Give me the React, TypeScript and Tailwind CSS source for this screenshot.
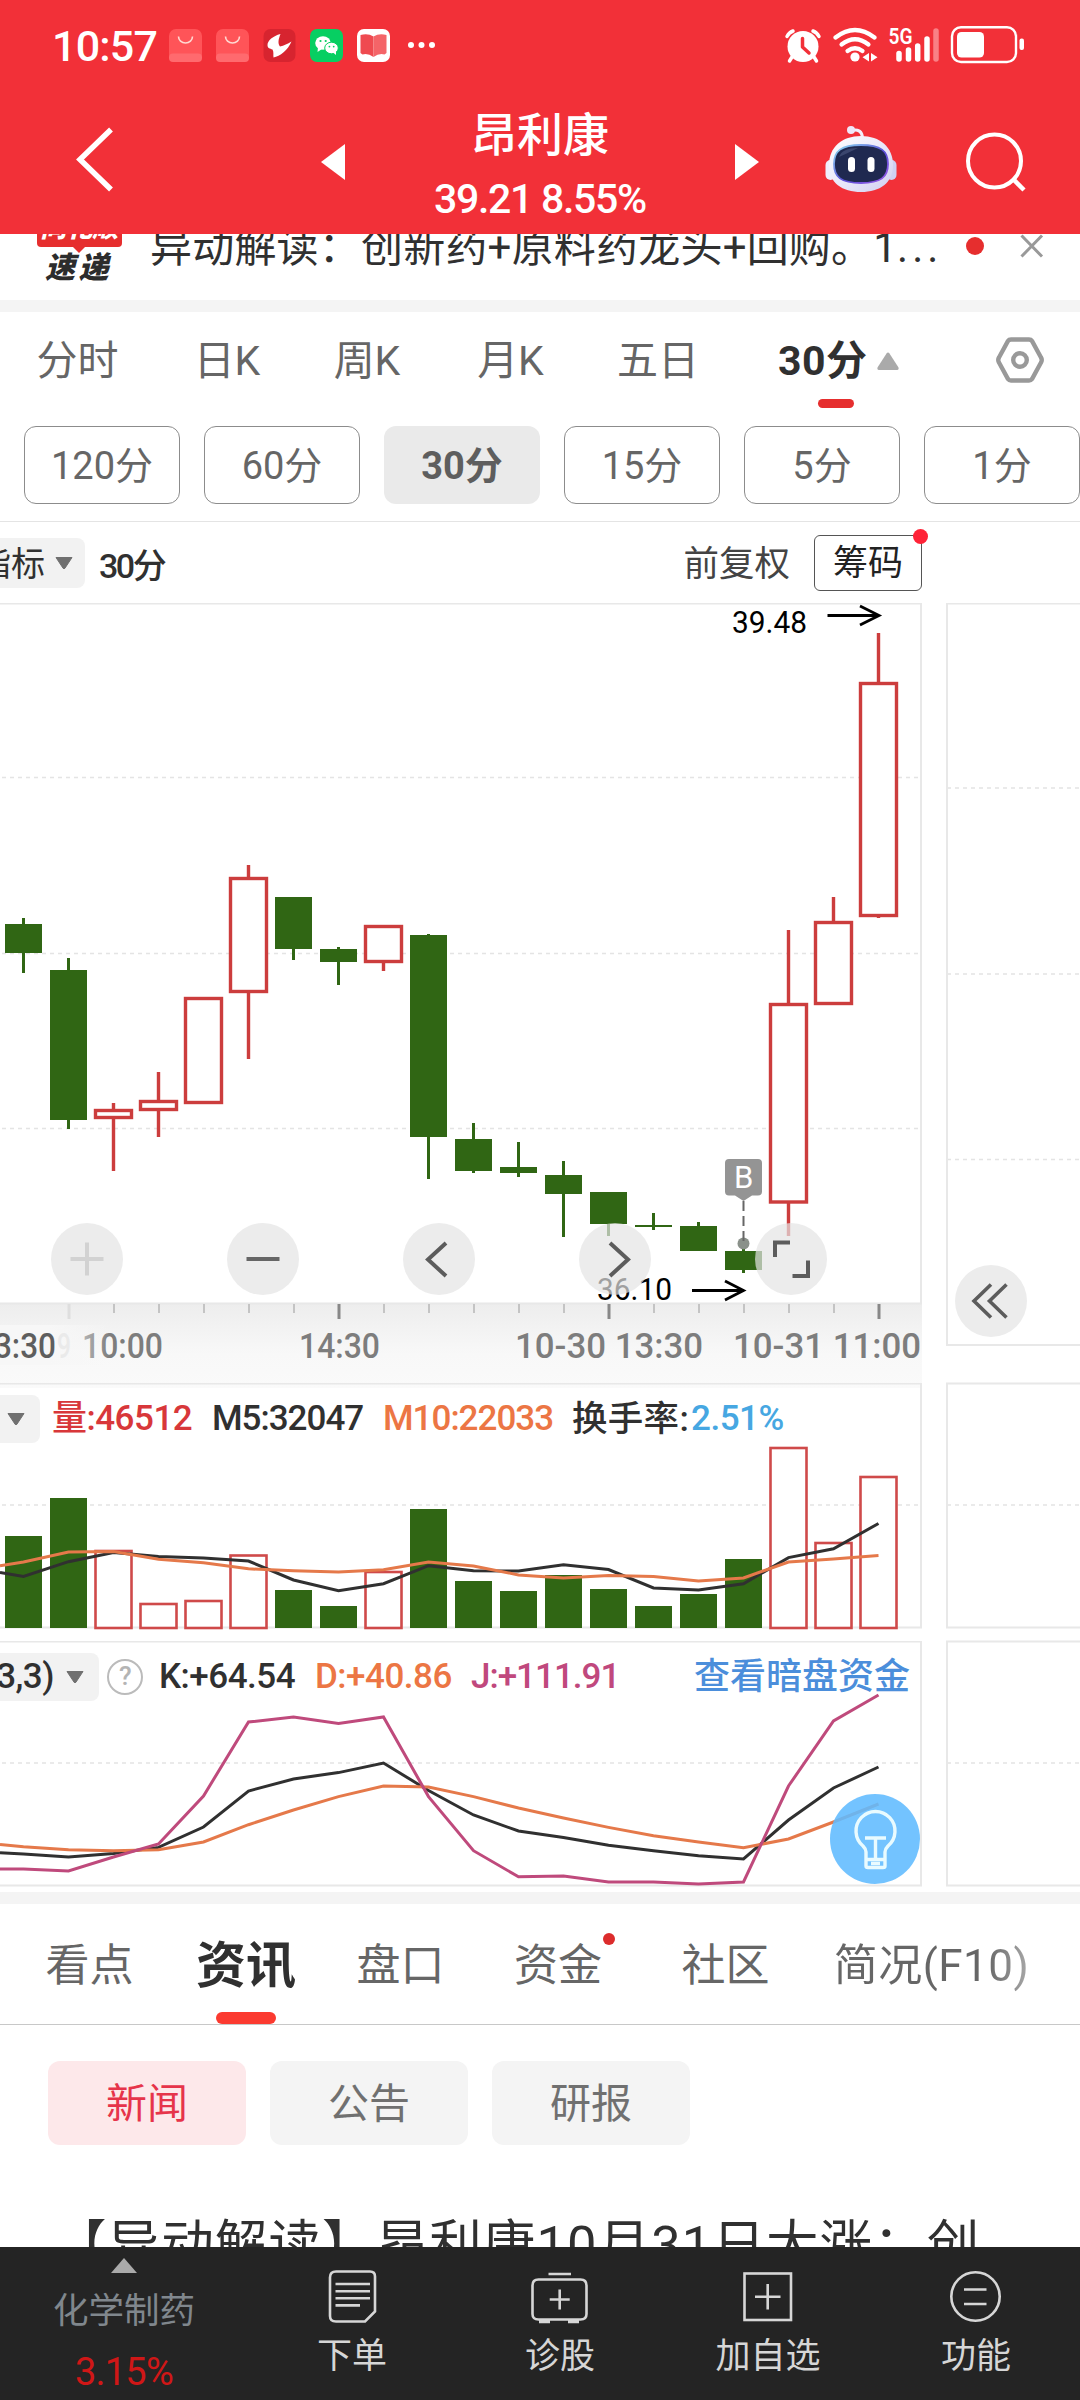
import React from 'react';

interface Candle {
  up: boolean;
  high: number;
  top: number;
  bottom: number;
  low: number;
  volumeTop: number;
}

const X0 = 23.5;
const STEP = 45;
const RED = '#cc3d3d';
const GREEN = '#306614';

// all y values share one vertical scale, each svg shows its own slice of it
const candles: Candle[] = [
  { up: false, high: 918, top: 924, bottom: 953, low: 973, volumeTop: 1536 },
  { up: false, high: 958, top: 970, bottom: 1120, low: 1129, volumeTop: 1498 },
  { up: true, high: 1103, top: 1110.5, bottom: 1117.5, low: 1171, volumeTop: 1551 },
  { up: true, high: 1072, top: 1101.5, bottom: 1109.5, low: 1137, volumeTop: 1604 },
  { up: true, high: 998, top: 998.5, bottom: 1102.5, low: 1103, volumeTop: 1601 },
  { up: true, high: 865, top: 878.5, bottom: 991.5, low: 1059, volumeTop: 1555.5 },
  { up: false, high: 897, top: 897, bottom: 949, low: 960, volumeTop: 1590 },
  { up: false, high: 947, top: 949, bottom: 962, low: 985, volumeTop: 1606 },
  { up: true, high: 926, top: 926.5, bottom: 961.5, low: 971, volumeTop: 1572 },
  { up: false, high: 934, top: 935, bottom: 1137, low: 1179, volumeTop: 1509 },
  { up: false, high: 1123, top: 1139, bottom: 1171, low: 1173, volumeTop: 1581 },
  { up: false, high: 1142, top: 1167, bottom: 1173, low: 1177, volumeTop: 1591 },
  { up: false, high: 1161, top: 1175, bottom: 1194, low: 1237, volumeTop: 1575 },
  { up: false, high: 1192, top: 1192, bottom: 1224, low: 1236, volumeTop: 1589 },
  { up: false, high: 1213, top: 1225, bottom: 1227, low: 1230, volumeTop: 1606 },
  { up: false, high: 1222, top: 1226, bottom: 1251, low: 1251, volumeTop: 1594 },
  { up: false, high: 1245, top: 1251, bottom: 1270, low: 1273, volumeTop: 1559 },
  { up: true, high: 930, top: 1004.5, bottom: 1202, low: 1236, volumeTop: 1448 },
  { up: true, high: 897, top: 922.5, bottom: 1003.5, low: 1003, volumeTop: 1543 },
  { up: true, high: 633, top: 683.5, bottom: 915.5, low: 918, volumeTop: 1477 },
];

const m5 = [1576.5, 1561.7, 1552.5, 1556.6, 1558, 1561, 1580, 1590.8, 1583.7, 1565.7, 1570.8, 1571, 1564.7, 1569.5, 1588, 1590, 1583.7, 1557.6, 1548.8, 1523.5];
const m10 = [1562, 1552, 1551.5, 1559.3, 1562.7, 1568.8, 1570.8, 1572, 1569.8, 1562, 1566, 1574.9, 1578, 1575.5, 1576.6, 1581, 1578, 1562, 1559, 1555.6];
const kLine = [1854, 1857, 1853.5, 1847.4, 1827, 1791, 1779, 1772.6, 1763, 1790.5, 1815, 1831, 1837.5, 1845.3, 1850.7, 1855.8, 1859, 1820, 1788, 1767];
const dLine = [1846.7, 1849.7, 1850.7, 1849.7, 1842, 1824.7, 1810, 1796.6, 1786, 1787, 1796.6, 1808, 1818, 1827.4, 1835.8, 1842, 1847.7, 1839, 1822, 1804];
const jLine = [1869, 1871, 1857, 1844, 1796, 1722, 1717, 1723.6, 1717, 1796.6, 1850.7, 1876.8, 1876, 1882, 1882, 1884, 1882, 1786, 1721, 1695];

const cx = (i: number) => X0 + i * STEP;
const toPoints = (start: number, ys: number[]) =>
  [`0,${start}`, ...ys.map((y, i) => `${cx(i)},${y}`)].join(' ');

const Line: React.FC<{ start: number; data: number[]; color: string }> = ({ start, data, color }) => (
  <polyline points={toPoints(start, data)} fill="none" stroke={color} strokeWidth="3" />
);

const Grid: React.FC<{ ys: number[]; width: number }> = ({ ys, width }) => (
  <g stroke="#e4e4e4" strokeWidth="1.5" strokeDasharray="4 4">
    {ys.map(y => (
      <line key={y} x1="2" x2={width} y1={y} y2={y} />
    ))}
  </g>
);

const DownTriangle: React.FC = () => (
  <svg className="w-[18px] h-3 shrink-0" viewBox="0 0 18 12">
    <path d="M1 0.5H17L9.8 11.4Q9 12.4 8.2 11.4Z" fill="#707070" stroke="#707070" />
  </svg>
);

const BagIcon: React.FC = () => (
  <svg className="w-[33px] h-[33px]" viewBox="0 0 33 33">
    <rect width="33" height="33" rx="7" fill="#ff5458" />
    <rect y="24.5" width="33" height="8.5" rx="4" fill="#ff6a6e" />
    <path d="M9.5 7.5a7 6.5 0 0 0 14 0" fill="none" stroke="#ffd9d2" strokeWidth="1.6" />
  </svg>
);

const StatusBar: React.FC = () => (
  <div className="flex items-center h-[90px] pl-[52px] text-white">
    <span className="w-[117px] text-[43px] leading-[48px] font-medium tracking-[-0.8px] mt-0.5">10:57</span>
    <div className="flex gap-3.5 items-center">
      <BagIcon />
      <BagIcon />
      <svg className="w-[33px] h-[33px]" viewBox="0 0 33 33">
        <rect x="0.5" width="32" height="33" rx="7" fill="#d7242f" />
        <path d="M17.5 5C10 7 4.500 11.500 4.500 16C4.500 19.500 7 19.500 9.500 20.500C11 23 10 26 10.500 28.500C17 27.500 25 21 28.500 12.500C24.500 15 21 16.500 17 17.500C14.500 14.500 15.500 10 17.500 5Z" fill="#fff" />
      </svg>
      <svg className="w-[33px] h-[33px]" viewBox="0 0 33 33">
        <rect width="33" height="33" rx="7" fill="#07cf62" />
        <ellipse cx="13" cy="14" rx="7.8" ry="6.8" fill="#fff" />
        <path d="M8 18L7.5 23L12 20Z" fill="#fff" />
        <ellipse cx="21.5" cy="19" rx="6.8" ry="5.8" fill="#fff" stroke="#07cf62" strokeWidth="1" />
        <path d="M23 23.5L26 26L26 22Z" fill="#fff" />
        <g fill="#07cf62">
          <circle cx="10.5" cy="12" r="1.1" />
          <circle cx="15.7" cy="12" r="1.1" />
          <circle cx="19.4" cy="17.6" r="0.9" />
          <circle cx="23.7" cy="17.6" r="0.9" />
        </g>
      </svg>
      <svg className="w-[33px] h-[33px]" viewBox="0 0 33 33">
        <rect width="33" height="33" rx="7" fill="#fff" />
        <path d="M3.5 6Q11 4 16.500 7.5V28Q11 24 5.5 25.5L3.5 24Z" fill="#ef4a50" />
        <path d="M29.5 6Q22 4 16.500 7.5V28Q22 24 27.5 25.5L29.5 24Z" fill="#f46468" />
      </svg>
    </div>
    <svg className="w-7 h-2 ml-[17px]" viewBox="0 0 28 8" fill="#fff">
      <circle cx="4" cy="4" r="3" />
      <circle cx="14.5" cy="4" r="3" />
      <circle cx="25" cy="4" r="3" />
    </svg>
    <svg className="w-[246px] h-10 ml-auto mr-[52px]" viewBox="782 25 246 40" fill="none" stroke="#fff">
      {/* alarm */}
      <circle cx="803" cy="46.5" r="15.5" fill="#fff" stroke="none" />
      <path d="M787 36.5Q789 32.500 793 31M819 36.5Q817 32.500 813 31" strokeWidth="3.5" strokeLinecap="round" />
      <path d="M792 57L789.5 61M814 57L816.5 61" strokeWidth="3.5" strokeLinecap="round" />
      <path d="M802.5 38.5V47L809 53" stroke="#f23038" strokeWidth="3.5" strokeLinecap="round" strokeLinejoin="round" />
      {/* wifi */}
      <g strokeWidth="4.2" strokeLinecap="round">
        <path d="M835.500 37.500Q855 22.500 874.500 37.500" />
        <path d="M841.5 44.5Q855 34 868.5 44.5" />
        <path d="M847.5 51Q855 45.5 862.5 51" />
      </g>
      <circle cx="855" cy="57" r="4.6" fill="#fff" stroke="none" />
      <path d="M869 53V61.5L862.5 57.2ZM871 53L877.5 57.2L871 61.5Z" fill="#fff" stroke="none" />
      <text x="888.5" y="44" fontSize="22" fontWeight="600" fill="#fff" stroke="none" textLength="24" lengthAdjust="spacingAndGlyphs">5G</text>
      <g strokeWidth="5.5" strokeLinecap="round">
        <path d="M899 53.5V59" />
        <path d="M908.5 50V59" />
        <path d="M917.7 46V59" />
        <path d="M927 39V59" />
        <path d="M936 31V59" stroke="#f98085" />
      </g>
      <rect x="952" y="27.2" width="64" height="34.8" rx="9" strokeWidth="2.4" />
      <rect x="957" y="32" width="27" height="25.5" rx="4.5" fill="#fff" stroke="none" />
      <rect x="1019.5" y="38.5" width="4.5" height="11.5" rx="2" fill="#fff" stroke="none" />
    </svg>
  </div>
);

const Robot: React.FC = () => (
  <svg className="w-[72px] h-[68px]" viewBox="825 125 72 68">
    <defs>
      <linearGradient id="head" x1="0" y1="0" x2="1" y2="1">
        <stop offset="0" stopColor="#fff" />
        <stop offset="0.6" stopColor="#e6e4f8" />
        <stop offset="1" stopColor="#cfcdf0" />
      </linearGradient>
      <linearGradient id="rim" x1="0" y1="0" x2="1" y2="1">
        <stop offset="0" stopColor="#8fe0f2" />
        <stop offset="0.55" stopColor="#5a4fd8" />
        <stop offset="1" stopColor="#9a58e6" />
      </linearGradient>
    </defs>
    <path d="M851 130.5Q862 128 862.5 138" fill="none" stroke="#f3eefb" strokeWidth="3" />
    <circle cx="851" cy="130" r="4" fill="#efe6f8" />
    <rect x="825.5" y="160" width="10" height="20" rx="5" fill="#efeefc" />
    <rect x="886.5" y="160" width="10" height="20" rx="5" fill="#cfd0f3" />
    <path d="M861 136C880 136 893 147 893 165C893 183 880 192 861 192C842 192 829 183 829 165C829 147 842 136 861 136Z" fill="url(#head)" />
    <path d="M861 145C881 145 888 151 888 164C888 177 881 183 861 183C841 183 834 177 834 164C834 151 841 145 861 145Z" fill="#1f2950" stroke="url(#rim)" strokeWidth="1.8" />
    <path d="M839 157Q842 148 858 148Q848 153 839 157Z" fill="#47527a" opacity="0.7" />
    <rect x="848" y="157" width="7" height="15" rx="3.5" fill="#fff" />
    <rect x="867.5" y="157" width="7" height="15" rx="3.5" fill="#fff" />
  </svg>
);

const Header: React.FC = () => (
  <header className="bg-[#f23038] h-[234px]">
    <StatusBar />
    <div className="flex items-center h-36 text-white">
      <svg className="w-10 h-[66px] ml-[75px] -mt-1.5" viewBox="0 0 40 66">
        <path d="M36 3.5L5 33.5L36 63.5" fill="none" stroke="#fff" strokeWidth="5.5" />
      </svg>
      <svg className="w-6 h-9 ml-[206px]" viewBox="0 0 24 36">
        <path d="M24 0V36L0 18Z" fill="#fff" />
      </svg>
      <div className="w-[390px] flex flex-col items-center pt-[10px] whitespace-nowrap">
        <span className="text-[46px] leading-[64px] font-medium">昂利康</span>
        <span className="text-[41px] leading-[64px] font-medium tracking-[-1.3px]">39.21 8.55%</span>
      </div>
      <svg className="w-6 h-9" viewBox="0 0 24 36">
        <path d="M0 0V36L24 18Z" fill="#fff" />
      </svg>
      <div className="ml-[66px] -mt-1.5">
        <Robot />
      </div>
      <svg className="w-[62px] h-[62px] ml-[68px]" viewBox="965 131 62 62" fill="none" stroke="#fff" strokeWidth="4">
        <circle cx="994.5" cy="161" r="26.5" />
        <path d="M1013 179L1024 190" strokeWidth="4.5" />
      </svg>
    </div>
  </header>
);

const Notice: React.FC = () => (
  <div className="h-[66px] overflow-hidden flex items-start">
    <div className="w-[85px] ml-[37px] shrink-0 -mt-[22px]">
      <div className="relative h-[35px] bg-[#e62e2e] rounded-[4px] text-center text-white text-[26px] leading-[32px] font-black italic">
        同花顺
        <svg className="absolute left-9 top-[35px] w-3 h-1.5" viewBox="0 0 12 6">
          <path d="M0 0H12L6 6Z" fill="#e62e2e" />
        </svg>
      </div>
      <div className="pl-2 text-[30px] leading-[31px] mt-[5px] tracking-[3.500px] whitespace-nowrap font-black italic text-[#2c2c2c]">速递</div>
    </div>
    <p className="ml-[28px] w-[791px] shrink-0 -mt-[14px] text-[42px] leading-[56px] text-[#303030] tracking-[0.2px] whitespace-nowrap">
      异动解读：创新药+原料药龙头+回购。1<span className="tracking-[4px]">...</span>
    </p>
    <span className="ml-[25px] mt-[3px] w-[18px] h-[18px] rounded-full bg-[#e62e2e]" />
    <svg className="w-6 h-6 ml-9" viewBox="0 0 24 24">
      <path d="M1.5 1.5L22 22.5M22 1.5L1.5 22.5" stroke="#999" strokeWidth="3" />
    </svg>
  </div>
);

const PeriodTabs: React.FC = () => {
  const minutes = ['120分', '60分', '30分', '15分', '5分', '1分'];

  return (
    <div className="h-[210px] border-b border-[#e4e4e4] text-[#666]">
      <div className="flex h-[114px] pt-[21px] text-[41px] leading-[56px] text-center">
        <span className="w-[155px]">分时</span>
        <span className="w-[144px]">日K</span>
        <span className="w-[136px]">周K</span>
        <span className="w-[151px]">月K</span>
        <span className="w-[144px]">五日</span>
        <div className="relative ml-[48px] w-[122px] flex items-start">
          <span className="font-bold text-[#303030] tracking-[0.500px]">30分</span>
          <svg className="w-[22px] h-[18px] mt-[19px] ml-[9px] shrink-0" viewBox="0 0 22 18">
            <path d="M9.5 1.5Q11 -0.5 12.5 1.5L21.5 15.5Q22 18 20 18H2Q0 18 0.5 15.5Z" fill="#aaa" />
          </svg>
          <span className="absolute left-[40px] top-[66px] w-9 h-[9px] rounded-full bg-[#e62e2e]" />
        </div>
        <svg className="w-12 h-[46px] ml-[96px] mt-[4px]" viewBox="0 0 48 46" fill="none" stroke="#999" strokeWidth="4.4">
          <path d="M15 2.5H33Q35 2.5 36 4L45 20.5Q46.5 23 45 25.5L36 42Q35 43.5 33 43.5H15Q13 43.5 12 42L3 25.5Q1.5 23 3 20.5L12 4Q13 2.5 15 2.5Z" />
          <circle cx="24" cy="23" r="6.8" />
        </svg>
      </div>
      <div className="flex gap-6 pl-6">
        {minutes.map(label => (
          <button
            key={label}
            className={
              label === '30分'
                ? 'w-[156px] h-[78px] shrink-0 rounded-xl bg-[#eaeaea] pt-[3px] text-[38px] font-bold text-[#5e5e5e]'
                : 'w-[156px] h-[78px] shrink-0 rounded-xl border border-[#8c8c8c] pt-[3px] text-[38px]'
            }
          >
            {label}
          </button>
        ))}
      </div>
    </div>
  );
};

const ChartToolbar: React.FC = () => (
  <div className="flex items-center h-20 text-[34px]">
    <div className="w-[85px] h-[50px] flex items-center justify-end gap-2.5 pr-3 overflow-hidden rounded-r-lg bg-[#f2f2f2] text-[#303030]">
      <span className="shrink-0 pt-0.5">指标</span>
      <DownTriangle />
    </div>
    <span className="ml-[14px] mt-1.5 font-medium text-[#303030] tracking-[-2.5px]">30分</span>
    <span className="ml-auto text-[35.500px] text-[#444] mt-1">前复权</span>
    <div className="relative w-[108px] h-14 ml-[24px] mr-[158px] pt-0.5 border border-[#555] rounded-md flex items-center justify-center text-[35px] text-[#222]">
      筹码
      <span className="absolute -top-[7px] -right-[7px] w-[15px] h-[15px] rounded-full bg-[#ff2337]" />
    </div>
  </div>
);

const PriceChart: React.FC = () => (
  <svg className="block w-[922px] h-[785px]" viewBox="0 603 922 785">
    <defs>
      <linearGradient id="axis" x1="0" y1="0" x2="0" y2="1">
        <stop offset="0" stopColor="#ededed" />
        <stop offset="0.6" stopColor="#f8f8f8" />
        <stop offset="1" stopColor="#fafafa" />
      </linearGradient>
      <linearGradient id="axisFade" x1="0" y1="0" x2="1" y2="0">
        <stop offset="0" stopColor="#f7f7f7" />
        <stop offset="0.45" stopColor="#f7f7f7" />
        <stop offset="1" stopColor="#f7f7f7" stopOpacity="0" />
      </linearGradient>
    </defs>
    <Grid ys={[777.5, 953.5, 1128.5]} width={920} />
    <rect x="0" y="1303" width="922" height="85" fill="url(#axis)" />
    <path d="M0 603.5H921V1303.5H0" fill="none" stroke="#e8e8e8" strokeWidth="2" />

    {candles.map((c, i) =>
      c.up ? (
        <g key={i} stroke={RED} strokeWidth="3.4">
          <path d={`M${cx(i)} ${c.high}V${c.top}M${cx(i)} ${c.bottom}V${c.low}`} />
          <rect x={cx(i) - 18} y={c.top} width="36" height={c.bottom - c.top} fill="#fff" />
        </g>
      ) : (
        <g key={i} fill={GREEN}>
          <rect x={cx(i) - 1.5} y={c.high} width="3" height={c.low - c.high} />
          <rect x={cx(i) - 18.5} y={c.top} width="37" height={c.bottom - c.top} />
        </g>
      )
    )}

    {/* high / low marks */}
    <g fontSize="31">
      <text x="732" y="633" textLength="75" lengthAdjust="spacingAndGlyphs">39.48</text>
      <text x="597" y="1300" textLength="75" lengthAdjust="spacingAndGlyphs">36.10</text>
    </g>
    <g fill="none" stroke="#000" strokeWidth="2.8">
      <path d="M827.5 615.5H879M860 606L879 615.5L860 625" />
      <path d="M692 1290.5H743.5M725 1281L743.5 1290.5L725 1300" />
    </g>

    {/* buy point */}
    <circle cx="743.5" cy="1243.5" r="6" fill="#8a918a" />
    <path d="M743.5 1201V1241" stroke="#666" strokeWidth="2" strokeDasharray="10 5" />
    <path d="M729 1159H758Q762 1159 762 1163V1191.5Q762 1195.5 758 1195.5H752L743.5 1201L735 1195.5H729Q725 1195.5 725 1191.5V1163Q725 1159 729 1159Z" fill="#949494" />
    <text x="743.7" y="1188" fontSize="31" fill="#fff" textAnchor="middle">B</text>

    {candles.map((_, i) => {
      const major = i % 6 === 1;
      if (i === 0) return null;
      return (
        <path
          key={i}
          d={`M${cx(i) + 0.5} 1304V${major ? 1319 : 1313}`}
          stroke={i === 1 ? '#dedede' : major ? '#888' : '#c4c4c4'}
          strokeWidth={major ? 3 : 2}
        />
      );
    })}
    <g fontSize="35" fontWeight="500" fill="#7d7d7d">
      <text x="82" y="1357.500" textLength="81" lengthAdjust="spacingAndGlyphs">10:00</text>
      <text x="299" y="1357.500" textLength="81" lengthAdjust="spacingAndGlyphs">14:30</text>
      <text x="515" y="1357.500" textLength="188" lengthAdjust="spacingAndGlyphs">10-30 13:30</text>
      <text x="733" y="1357.500" textLength="188" lengthAdjust="spacingAndGlyphs">10-31 11:00</text>
      <rect x="0" y="1325" width="110" height="40" fill="url(#axisFade)" />
      <text x="57" y="1357.500" fill="#eaeaea" textLength="14" lengthAdjust="spacingAndGlyphs">9</text>
      <text x="-24" y="1357.500" fill="#5e5e5e" textLength="80" lengthAdjust="spacingAndGlyphs">13:30</text>
    </g>
  </svg>
);

const controls = [
  { id: 'zoom-in', d: 'M19.5 36H52.5M36 19.5V52.5', stroke: '#d2d2d2' },
  { id: 'zoom-out', d: 'M19.5 36H52.5', stroke: '#666' },
  { id: 'prev', d: 'M43 20L25 36.5L43 53', stroke: '#5c5c5c' },
  { id: 'next', d: 'M31 20L49 36.5L31 53', stroke: '#5c5c5c' },
  { id: 'fullscreen', d: 'M20 34V19.5H35M37.5 53H53V37.5', stroke: '#5c5c5c' },
];

const ChartControls: React.FC = () => (
  <div className="absolute left-[51px] top-[620px] flex gap-[104px]">
    {controls.map(c => (
      <button key={c.id} className="w-[72px] h-[72px] rounded-full bg-[rgba(228,228,228,0.7)]">
        <svg className="w-[72px] h-[72px]" viewBox="0 0 72 72">
          <path d={c.d} fill="none" stroke={c.stroke} strokeWidth="4" />
        </svg>
      </button>
    ))}
  </div>
);

const VolumePanel: React.FC = () => (
  <div className="relative h-[245px] -mt-[5px] text-[35px] leading-[48px] font-medium tracking-[-1px]">
    <svg className="absolute inset-0 w-[922px] h-[247px]" viewBox="0 1383 922 247">
      <Grid ys={[1505]} width={920} />
      <path d="M0 1383.5H921V1627.5H0" fill="none" stroke="#e8e8e8" strokeWidth="2" />
      {candles.map((c, i) =>
        c.up ? (
          <rect key={i} x={cx(i) - 18} y={c.volumeTop} width="36" height={1628 - c.volumeTop} fill="#fff" stroke="#cf4a4a" strokeWidth="2.6" />
        ) : (
          <rect key={i} x={cx(i) - 18.5} y={c.volumeTop} width="37" height={1628 - c.volumeTop} fill={GREEN} />
        )
      )}
      <Line start={1572.5} data={m5} color="#303030" />
      <Line start={1565.7} data={m10} color="#e5794a" />
    </svg>
    <div className="relative flex items-center pt-[12px] whitespace-nowrap">
      <div className="w-10 h-12 flex items-center justify-end pr-[15px] rounded-r-lg bg-[#f2f2f2]">
        <DownTriangle />
      </div>
      <span className="ml-3 w-40 text-[#d8373a] tracking-[-0.5px]">量:46512</span>
      <span className="w-[171px] text-[#303030]">M5:32047</span>
      <span className="w-[189px] text-[#ec7644]">M10:22033</span>
      <span className="text-[#303030] text-[35.500px] tracking-[0.300px]">换手率:</span>
      <span className="text-[#46a7e2] tracking-[-0.500px] ml-0.5">2.51%</span>
    </div>
  </div>
);

const KdjPanel: React.FC = () => (
  <div className="relative h-[245px] mt-[13px] text-[35px] leading-[48px] font-medium tracking-[-0.5px]">
    <svg className="absolute inset-0 w-[922px] h-[247px]" viewBox="0 1641 922 247">
      <Grid ys={[1763]} width={920} />
      <path d="M0 1641.5H921V1885.5H0" fill="none" stroke="#e8e8e8" strokeWidth="2" />
      <Line start={1852.8} data={kLine} color="#303030" />
      <Line start={1844.6} data={dLine} color="#e5794a" />
      <Line start={1869} data={jLine} color="#bf4a7c" />
    </svg>
    <div className="relative flex items-center pt-[12px] whitespace-nowrap">
      <div className="w-[99px] h-12 flex items-center justify-end gap-3 pr-[15px] overflow-hidden rounded-r-lg bg-[#f2f2f2] text-[#303030]">
        <span className="shrink-0">KDJ(9,3,3)</span>
        <DownTriangle />
      </div>
      <span className="w-9 h-9 ml-2 mr-[16px] rounded-full border-[2.5px] border-[#bbb] text-[#b4b4b4] text-[26px] leading-[31px] text-center">?</span>
      <span className="w-[156px] text-[#303030]">K:+64.54</span>
      <span className="w-[156px] text-[#ec7644]">D:+40.86</span>
      <span className="text-[#c0487d] tracking-[-1px]">J:+111.91</span>
      <span className="absolute right-[12px] text-[36px] tracking-normal text-[#4b8edb]">查看暗盘资金</span>
    </div>
    <button className="absolute left-[830px] top-[153px] w-[90px] h-[90px] rounded-full bg-[rgba(96,187,255,0.88)]">
      <svg className="w-[90px] h-[90px]" viewBox="0 0 90 90" fill="none" stroke="#e9fbff" strokeWidth="3.4">
        <path d="M36 72V58Q36 55 33 52A19.5 19.5 0 1 1 58 52Q55 55 55 58V72Q55 73.5 53 73.5H38Q36 73.5 36 72Z" />
        <path d="M35 44H56M45.5 44V65M36 65.5H55M41 69.5H50" />
      </svg>
    </button>
  </div>
);

const SidePanels: React.FC = () => (
  <div className="relative w-[134px]">
    <svg className="block w-[134px] h-[1285px]" viewBox="946 603 134 1285">
      <g stroke="#e4e4e4" strokeWidth="1.5" strokeDasharray="4 4">
        {[788, 974, 1159.5, 1505, 1763].map(y => (
          <line key={y} x1="947" x2="1080" y1={y} y2={y} />
        ))}
      </g>
      <g fill="none" stroke="#e8e8e8" strokeWidth="2">
        <path d="M1082 603.5H947V1345H1082" />
        <path d="M1082 1383.5H947V1627.5H1082" />
        <path d="M1082 1641.5H947V1885.5H1082" />
      </g>
    </svg>
    <button className="absolute left-[9px] top-[662px] w-[72px] h-[72px] rounded-full bg-[#ececec]">
      <svg className="w-[72px] h-[72px]" viewBox="0 0 72 72" fill="none" stroke="#5c5c5c" strokeWidth="3.6">
        <path d="M36 19.5L19 36L36 52.5M51.5 19.5L34.5 36L51.5 52.5" />
      </svg>
    </button>
  </div>
);

const InfoTabs: React.FC = () => (
  <div className="flex h-[121px] pt-[34px] border-b border-[#c8c8c8] text-[44px] leading-[56px] text-[#666] text-center whitespace-nowrap">
    <span className="w-[179px]">看点</span>
    <div className="relative w-[134px]">
      <span className="-mx-2 text-[50px] font-bold text-[#303030]">资讯</span>
      <span className="absolute left-[37px] top-[74px] w-[60px] h-3 rounded-full bg-[#fb3a30]" />
    </div>
    <span className="w-[175px]">盘口</span>
    <div className="relative w-[140px]">
      资金
      <span className="absolute right-[13px] -top-[5px] w-3 h-3 rounded-full bg-[#dc2c2c]" />
    </div>
    <span className="w-[195px]">社区</span>
    <span className="w-[217px] tracking-[0.500px] bg-linear-to-r from-[#666] from-75% to-[#bbb] bg-clip-text text-transparent">简况(F10)</span>
  </div>
);

const News: React.FC = () => (
  <div className="h-[222px] pt-9 overflow-hidden">
    <div className="flex gap-6 pl-12 text-[41px] leading-[87px] text-center text-[#707070]">
      <span className="w-[198px] h-[84px] rounded-xl bg-[#fde8ea] text-[#e6344a]">新闻</span>
      <span className="w-[198px] h-[84px] rounded-xl bg-[#f4f4f4]">公告</span>
      <span className="w-[198px] h-[84px] rounded-xl bg-[#f4f4f4]">研报</span>
    </div>
    <h2 className="mt-[60px] ml-[54px] text-[52.5px] leading-[80px] text-[#303030] tracking-[1.1px] whitespace-nowrap">
      【异动解读】昂利康10月31日大涨：创
    </h2>
  </div>
);

const BottomBar: React.FC = () => {
  const items = [
    {
      label: '下单',
      icon: (
        <>
          <path d="M14 3.500H48Q53 3.500 53 8.500V43.500L43 53.500H14Q8 53.500 8 48V9.500Q8 3.500 14 3.500Z" />
          <path d="M13.5 16H48M13.5 23.200H48M13.5 30.200H48M13.5 37.400H38" />
        </>
      ),
    },
    {
      label: '诊股',
      icon: (
        <>
          <path d="M8.500 11.500H50.500Q56.500 11.500 56.500 17.500V46Q56.500 51.500 50.500 51.500H8.500Q2.500 51.500 2.500 46V17.500Q2.500 11.500 8.500 11.500Z" />
          <path d="M18.500 6H41M29.700 21.500V41.500M19.700 31.500H39.700" />
          <path d="M9 53.500H20M38 53.500H49" strokeWidth="3.600" />
        </>
      ),
    },
    {
      label: '加自选',
      icon: (
        <>
          <rect x="6.5" y="5.5" width="46.5" height="46.5" />
          <path d="M29.7 16V41.5M17 28.7H42.5" />
        </>
      ),
    },
    {
      label: '功能',
      icon: (
        <>
          <circle cx="29.500" cy="28.5" r="24.2" />
          <path d="M18 21.5H40.500M18 36H40.500" />
        </>
      ),
    },
  ];

  return (
    <nav className="flex h-[153px] bg-[#242424] text-[#d6d6d6]">
      <div className="w-[248px] flex flex-col items-center pt-[11px]">
        <svg className="w-[26px] h-[15px]" viewBox="0 0 26 15">
          <path d="M0 15L13 0L26 15Z" fill="#aaa" />
        </svg>
        <span className="mt-[14px] text-[35.5px] leading-[48px] text-[#80878d]">化学制药</span>
        <span className="mt-[13px] text-[38px] leading-[48px] text-[#d01717] tracking-[-0.8px]">3.15%</span>
      </div>
      {items.map(item => (
        <div key={item.label} className="w-[208px] flex flex-col items-center pt-[21px]">
          <svg className="w-[60px] h-[60px]" viewBox="0 0 60 60" fill="none" stroke="#d6d6d6" strokeWidth="2.6">
            {item.icon}
          </svg>
          <span className="mt-[5px] text-[35px] leading-[48px]">{item.label}</span>
        </div>
      ))}
    </nav>
  );
};

const App: React.FC = () => {
  return (
    <div className="w-[1080px] h-[2400px] overflow-hidden bg-white font-['Roboto','Noto_Sans_CJK_SC',sans-serif]">
      <Header />
      <Notice />
      <div className="h-3 bg-[#f4f4f4]" />
      <PeriodTabs />
      <div className="h-px" />
      <ChartToolbar />
      <div className="flex gap-6 h-[1289px]">
        <div className="relative w-[922px]">
          <PriceChart />
          <ChartControls />
          <VolumePanel />
          <KdjPanel />
        </div>
        <SidePanels />
      </div>
      <div className="h-3 bg-[#f4f4f4]" />
      <InfoTabs />
      <News />
      <BottomBar />
    </div>
  );
};

export default App;
